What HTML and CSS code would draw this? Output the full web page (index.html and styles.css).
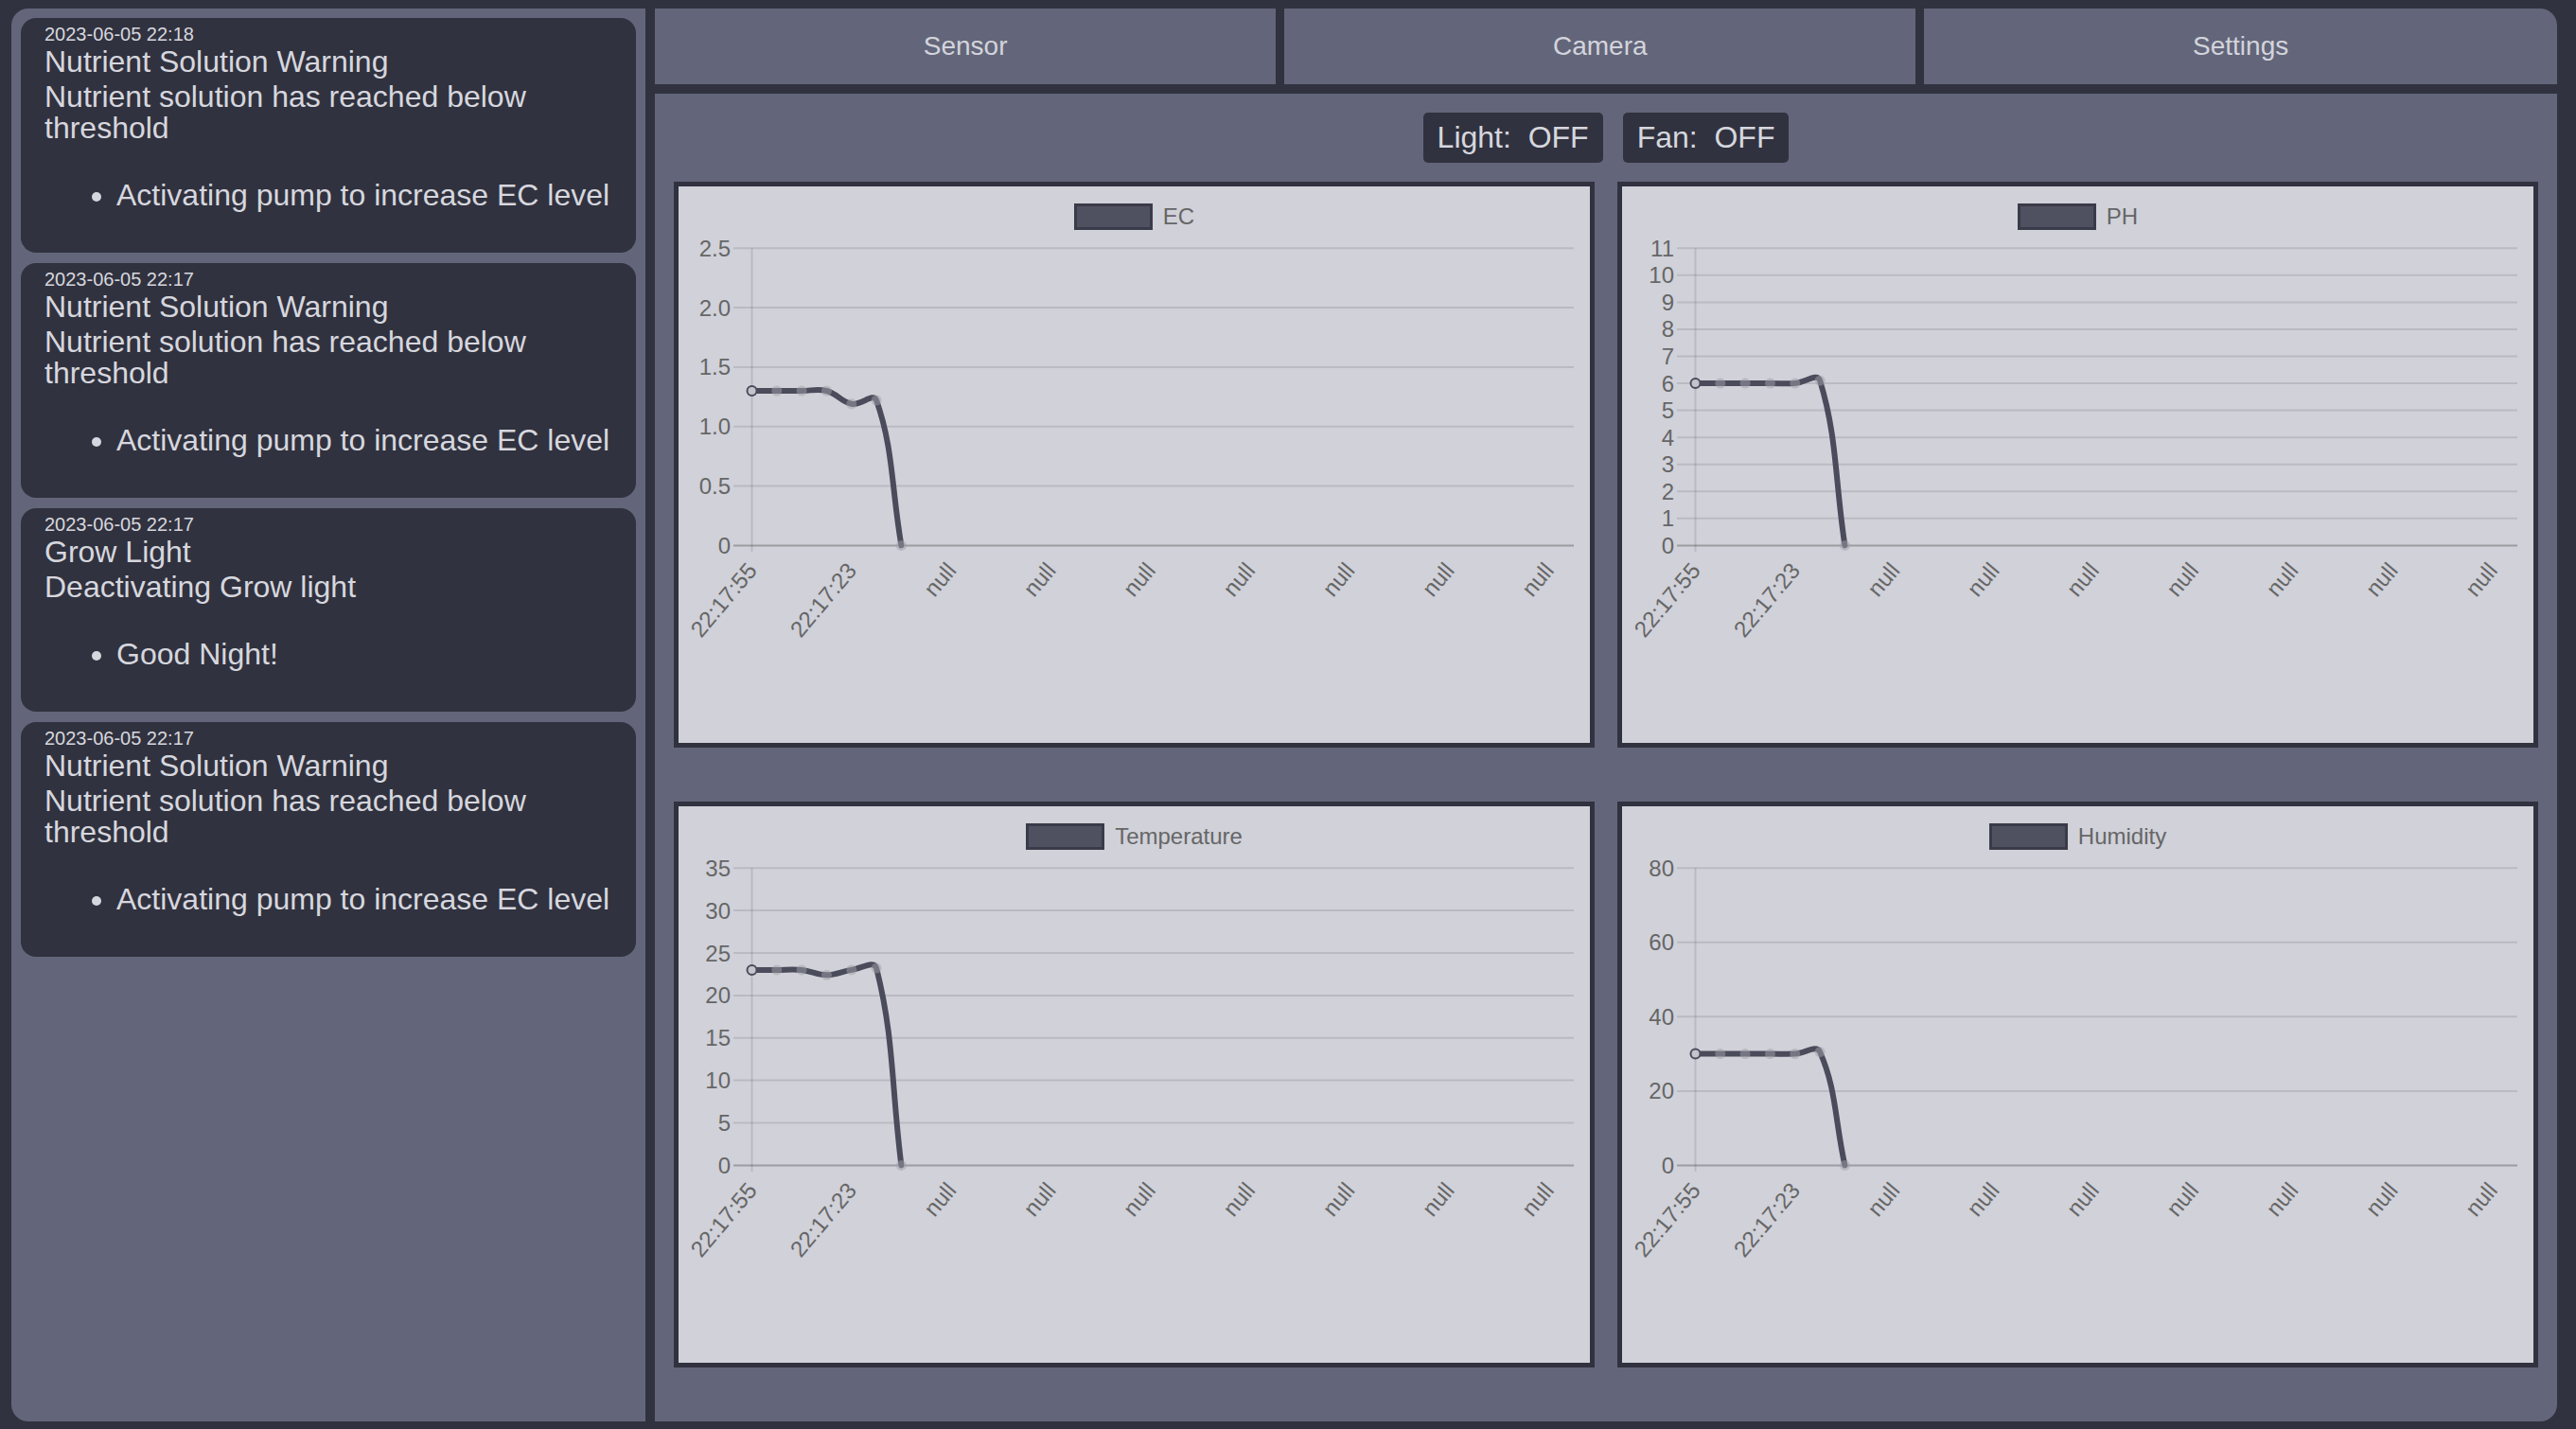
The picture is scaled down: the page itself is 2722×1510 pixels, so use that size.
FILE: index.html
```html
<!DOCTYPE html>
<html lang="en">
<head>
<meta charset="utf-8">
<title>Grow Dashboard</title>
<link rel="stylesheet" href="styles.css">
</head>
<body>
<div class="app">
  <aside class="sidebar">
    <article class="note">
      <div class="note-time">2023-06-05 22:18</div>
      <div class="note-title">Nutrient Solution Warning</div>
      <p class="note-msg">Nutrient solution has reached below threshold</p>
      <ul class="note-actions"><li>Activating pump to increase EC level</li></ul>
    </article>
    <article class="note">
      <div class="note-time">2023-06-05 22:17</div>
      <div class="note-title">Nutrient Solution Warning</div>
      <p class="note-msg">Nutrient solution has reached below threshold</p>
      <ul class="note-actions"><li>Activating pump to increase EC level</li></ul>
    </article>
    <article class="note">
      <div class="note-time">2023-06-05 22:17</div>
      <div class="note-title">Grow Light</div>
      <p class="note-msg">Deactivating Grow light</p>
      <ul class="note-actions"><li>Good Night!</li></ul>
    </article>
    <article class="note">
      <div class="note-time">2023-06-05 22:17</div>
      <div class="note-title">Nutrient Solution Warning</div>
      <p class="note-msg">Nutrient solution has reached below threshold</p>
      <ul class="note-actions"><li>Activating pump to increase EC level</li></ul>
    </article>
  </aside>

  <main class="main">
    <nav class="tabs">
      <div class="tab">Sensor</div>
      <div class="tab">Camera</div>
      <div class="tab">Settings</div>
    </nav>

    <section class="panel">
      <div class="status">
        <div class="badge">Light:&nbsp; OFF</div>
        <div class="badge">Fan:&nbsp; OFF</div>
      </div>

      <div class="charts">
        <!-- EC -->
        <div class="chart">
          <div class="legend"><span class="legend-box"></span><span>EC</span></div>
          <svg class="plot" viewBox="0 0 963 542">
            <g class="grid">
              <line x1="58" x2="946" y1="19.2" y2="19.2"/>
              <line x1="58" x2="946" y1="82" y2="82"/>
              <line x1="58" x2="946" y1="144.9" y2="144.9"/>
              <line x1="58" x2="946" y1="207.7" y2="207.7"/>
              <line x1="58" x2="946" y1="270.6" y2="270.6"/>
            </g>
            <line class="axis" x1="77.5" x2="77.5" y1="19.2" y2="340"/>
            <line class="zero" x1="58" x2="946" y1="333.4" y2="333.4"/>
            <g class="ylabels">
              <text x="55" y="19.2">2.5</text>
              <text x="55" y="82">2.0</text>
              <text x="55" y="144.9">1.5</text>
              <text x="55" y="207.7">1.0</text>
              <text x="55" y="270.6">0.5</text>
              <text x="55" y="333.4">0</text>
            </g>
            <g class="xlabels">
              <text transform="translate(77.5 355) rotate(-50)">22:17:55</text>
              <text transform="translate(182.8 355) rotate(-50)">22:17:23</text>
              <text transform="translate(288.1 355) rotate(-50)">null</text>
              <text transform="translate(393.3 355) rotate(-50)">null</text>
              <text transform="translate(498.6 355) rotate(-50)">null</text>
              <text transform="translate(603.9 355) rotate(-50)">null</text>
              <text transform="translate(709.2 355) rotate(-50)">null</text>
              <text transform="translate(814.5 355) rotate(-50)">null</text>
              <text transform="translate(919.7 355) rotate(-50)">null</text>
            </g>
            <path class="line" d="M77.5,170 C88,170 93.3,170 103.8,170 C114.3,170 119.6,170 130.1,170 C140.6,170 146.6,167.4 156.5,170 C167.7,172.9 171.7,181.7 182.8,183.8 C192.7,185.7 206,171.4 209.1,180.1 C227.1,231.3 224.9,272.1 235.4,333.4"/>
            <g class="pts">
              <circle cx="103.8" cy="170" r="5.5"/>
              <circle cx="130.1" cy="170" r="5.5"/>
              <circle cx="156.5" cy="170" r="5.5"/>
              <circle cx="182.8" cy="183.8" r="5.5"/>
              <circle cx="209.1" cy="180.1" r="5.5"/>
              <circle cx="235.4" cy="333.4" r="5.5"/>
            </g>
            <circle class="pt-first" cx="77.5" cy="170" r="5"/>
          </svg>
        </div>

        <!-- PH -->
        <div class="chart">
          <div class="legend"><span class="legend-box"></span><span>PH</span></div>
          <svg class="plot" viewBox="0 0 963 542">
            <g class="grid">
              <line x1="58" x2="946" y1="19.2" y2="19.2"/>
              <line x1="58" x2="946" y1="47.8" y2="47.8"/>
              <line x1="58" x2="946" y1="76.4" y2="76.4"/>
              <line x1="58" x2="946" y1="104.9" y2="104.9"/>
              <line x1="58" x2="946" y1="133.5" y2="133.5"/>
              <line x1="58" x2="946" y1="162" y2="162"/>
              <line x1="58" x2="946" y1="190.6" y2="190.6"/>
              <line x1="58" x2="946" y1="219.2" y2="219.2"/>
              <line x1="58" x2="946" y1="247.7" y2="247.7"/>
              <line x1="58" x2="946" y1="276.3" y2="276.3"/>
              <line x1="58" x2="946" y1="304.8" y2="304.8"/>
            </g>
            <line class="axis" x1="77.5" x2="77.5" y1="19.2" y2="340"/>
            <line class="zero" x1="58" x2="946" y1="333.4" y2="333.4"/>
            <g class="ylabels">
              <text x="55" y="19.2">11</text>
              <text x="55" y="47.8">10</text>
              <text x="55" y="76.4">9</text>
              <text x="55" y="104.9">8</text>
              <text x="55" y="133.5">7</text>
              <text x="55" y="162">6</text>
              <text x="55" y="190.6">5</text>
              <text x="55" y="219.2">4</text>
              <text x="55" y="247.7">3</text>
              <text x="55" y="276.3">2</text>
              <text x="55" y="304.8">1</text>
              <text x="55" y="333.4">0</text>
            </g>
            <g class="xlabels">
              <text transform="translate(77.5 355) rotate(-50)">22:17:55</text>
              <text transform="translate(182.8 355) rotate(-50)">22:17:23</text>
              <text transform="translate(288.1 355) rotate(-50)">null</text>
              <text transform="translate(393.3 355) rotate(-50)">null</text>
              <text transform="translate(498.6 355) rotate(-50)">null</text>
              <text transform="translate(603.9 355) rotate(-50)">null</text>
              <text transform="translate(709.2 355) rotate(-50)">null</text>
              <text transform="translate(814.5 355) rotate(-50)">null</text>
              <text transform="translate(919.7 355) rotate(-50)">null</text>
            </g>
            <path class="line" d="M77.5,162 C88,162 93.3,162 103.8,162 C114.3,162 119.6,162 130.1,162 C140.6,162 146,162 156.5,162 C167,162 172.3,162.6 182.8,162 C193.4,161.4 206.4,150.3 209.1,159.2 C227.4,218.8 224.9,263.7 235.4,333.4"/>
            <g class="pts">
              <circle cx="103.8" cy="162" r="5.5"/>
              <circle cx="130.1" cy="162" r="5.5"/>
              <circle cx="156.5" cy="162" r="5.5"/>
              <circle cx="182.8" cy="162" r="5.5"/>
              <circle cx="209.1" cy="159.2" r="5.5"/>
              <circle cx="235.4" cy="333.4" r="5.5"/>
            </g>
            <circle class="pt-first" cx="77.5" cy="162" r="5"/>
          </svg>
        </div>

        <!-- Temperature -->
        <div class="chart">
          <div class="legend"><span class="legend-box"></span><span>Temperature</span></div>
          <svg class="plot" viewBox="0 0 963 542">
            <g class="grid">
              <line x1="58" x2="946" y1="19.2" y2="19.2"/>
              <line x1="58" x2="946" y1="64.1" y2="64.1"/>
              <line x1="58" x2="946" y1="109" y2="109"/>
              <line x1="58" x2="946" y1="153.9" y2="153.9"/>
              <line x1="58" x2="946" y1="198.7" y2="198.7"/>
              <line x1="58" x2="946" y1="243.6" y2="243.6"/>
              <line x1="58" x2="946" y1="288.5" y2="288.5"/>
            </g>
            <line class="axis" x1="77.5" x2="77.5" y1="19.2" y2="340"/>
            <line class="zero" x1="58" x2="946" y1="333.4" y2="333.4"/>
            <g class="ylabels">
              <text x="55" y="19.2">35</text>
              <text x="55" y="64.1">30</text>
              <text x="55" y="109">25</text>
              <text x="55" y="153.9">20</text>
              <text x="55" y="198.7">15</text>
              <text x="55" y="243.6">10</text>
              <text x="55" y="288.5">5</text>
              <text x="55" y="333.4">0</text>
            </g>
            <g class="xlabels">
              <text transform="translate(77.5 355) rotate(-50)">22:17:55</text>
              <text transform="translate(182.8 355) rotate(-50)">22:17:23</text>
              <text transform="translate(288.1 355) rotate(-50)">null</text>
              <text transform="translate(393.3 355) rotate(-50)">null</text>
              <text transform="translate(498.6 355) rotate(-50)">null</text>
              <text transform="translate(603.9 355) rotate(-50)">null</text>
              <text transform="translate(709.2 355) rotate(-50)">null</text>
              <text transform="translate(814.5 355) rotate(-50)">null</text>
              <text transform="translate(919.7 355) rotate(-50)">null</text>
            </g>
            <path class="line" d="M77.5,126.9 C88,126.9 93.3,126.9 103.8,126.9 C114.3,126.9 119.7,125.8 130.1,126.9 C140.7,128 146,132.3 156.5,132.3 C167,132.3 172.2,128.4 182.8,126.9 C193.2,125.5 206.8,115.9 209.1,125.1 C227.8,198.5 224.9,250.1 235.4,333.4"/>
            <g class="pts">
              <circle cx="103.8" cy="126.9" r="5.5"/>
              <circle cx="130.1" cy="126.9" r="5.5"/>
              <circle cx="156.5" cy="132.3" r="5.5"/>
              <circle cx="182.8" cy="126.9" r="5.5"/>
              <circle cx="209.1" cy="125.1" r="5.5"/>
              <circle cx="235.4" cy="333.4" r="5.5"/>
            </g>
            <circle class="pt-first" cx="77.5" cy="126.9" r="5"/>
          </svg>
        </div>

        <!-- Humidity -->
        <div class="chart">
          <div class="legend"><span class="legend-box"></span><span>Humidity</span></div>
          <svg class="plot" viewBox="0 0 963 542">
            <g class="grid">
              <line x1="58" x2="946" y1="19.2" y2="19.2"/>
              <line x1="58" x2="946" y1="97.8" y2="97.8"/>
              <line x1="58" x2="946" y1="176.3" y2="176.3"/>
              <line x1="58" x2="946" y1="254.9" y2="254.9"/>
            </g>
            <line class="axis" x1="77.5" x2="77.5" y1="19.2" y2="340"/>
            <line class="zero" x1="58" x2="946" y1="333.4" y2="333.4"/>
            <g class="ylabels">
              <text x="55" y="19.2">80</text>
              <text x="55" y="97.8">60</text>
              <text x="55" y="176.3">40</text>
              <text x="55" y="254.9">20</text>
              <text x="55" y="333.4">0</text>
            </g>
            <g class="xlabels">
              <text transform="translate(77.5 355) rotate(-50)">22:17:55</text>
              <text transform="translate(182.8 355) rotate(-50)">22:17:23</text>
              <text transform="translate(288.1 355) rotate(-50)">null</text>
              <text transform="translate(393.3 355) rotate(-50)">null</text>
              <text transform="translate(498.6 355) rotate(-50)">null</text>
              <text transform="translate(603.9 355) rotate(-50)">null</text>
              <text transform="translate(709.2 355) rotate(-50)">null</text>
              <text transform="translate(814.5 355) rotate(-50)">null</text>
              <text transform="translate(919.7 355) rotate(-50)">null</text>
            </g>
            <path class="line" d="M77.5,215.6 C88,215.6 93.3,215.6 103.8,215.6 C114.3,215.6 119.6,215.6 130.1,215.6 C140.6,215.6 146,215.6 156.5,215.6 C167,215.6 172.3,216 182.8,215.6 C193.3,215.2 205.4,205.3 209.1,213.6 C226.4,252.4 224.9,285.5 235.4,333.4"/>
            <g class="pts">
              <circle cx="103.8" cy="215.6" r="5.5"/>
              <circle cx="130.1" cy="215.6" r="5.5"/>
              <circle cx="156.5" cy="215.6" r="5.5"/>
              <circle cx="182.8" cy="215.6" r="5.5"/>
              <circle cx="209.1" cy="213.6" r="5.5"/>
              <circle cx="235.4" cy="333.4" r="5.5"/>
            </g>
            <circle class="pt-first" cx="77.5" cy="215.6" r="5"/>
          </svg>
        </div>
      </div>
    </section>
  </main>
</div>
</body>
</html>
```

FILE: styles.css
```css
html, body {
  margin: 0;
  height: 100%;
  background: #31323f;
}

body {
  box-sizing: border-box;
  padding: 9px 20px 8px 12px;
  font-family: "Liberation Sans", Arial, Helvetica, sans-serif;
  color: #d6d7de;
}

.app {
  display: flex;
  gap: 10px;
  height: 1493px;
}

/* ---------- Sidebar ---------- */
.sidebar {
  box-sizing: border-box;
  width: 670px;
  flex: none;
  background: #63667a;
  border-radius: 18px 0 0 18px;
  padding: 10px;
  display: flex;
  flex-direction: column;
  gap: 11px;
}

.note {
  background: #31323f;
  border-radius: 16px;
  padding: 6px 15px 6px 25px;
}

.note-time {
  font-size: 20px;
  line-height: 23px;
}

.note-title {
  font-size: 32px;
  line-height: 33px;
  margin-top: 1px;
}

.note-msg {
  font-size: 32px;
  line-height: 33px;
  margin: 4px 0 0;
}

.note-actions {
  font-size: 32px;
  line-height: 33px;
  margin: 38px 0;
  padding-left: 76px;
}

/* ---------- Main ---------- */
.main {
  flex: 1;
  min-width: 0;
  display: flex;
  flex-direction: column;
  gap: 10px;
}

.tabs {
  display: flex;
  gap: 9px;
  height: 80px;
  flex: none;
}

.tab {
  flex: 1 1 auto;
  background: #63667a;
  display: flex;
  align-items: center;
  justify-content: center;
  font-size: 28px;
  color: #d3d4dc;
}

.tab:last-child {
  border-top-right-radius: 18px;
}

.panel {
  flex: 1;
  background: #63667a;
  border-bottom-right-radius: 18px;
  padding: 20px 20px 0 20px;
}

.status {
  display: flex;
  justify-content: center;
  gap: 21px;
  height: 53px;
  margin-bottom: 20px;
}

.badge {
  background: #31323f;
  border-radius: 5px;
  padding: 0 15px;
  font-size: 32px;
  line-height: 53px;
  white-space: nowrap;
}

.charts {
  display: grid;
  grid-template-columns: 1fr 1fr;
  grid-template-rows: 655px 655px;
  column-gap: 24px;
  align-items: start;
}

.chart {
  box-sizing: border-box;
  height: 598px;
  border: 5px solid #31323f;
  background: #d0d1d9;
  padding-top: 18px;
  display: flex;
  flex-direction: column;
}

.legend {
  height: 28px;
  display: flex;
  justify-content: center;
  align-items: center;
  gap: 11px;
  font-size: 24px;
  color: #666;
}

.legend-box {
  box-sizing: border-box;
  width: 83px;
  height: 28px;
  border: 3px solid #3a3b49;
  background: #4f5161;
}

.plot {
  display: block;
  width: 100%;
  height: 542px;
}

.grid line {
  stroke: rgba(0, 0, 0, 0.1);
  stroke-width: 2;
}

.axis {
  stroke: rgba(0, 0, 0, 0.1);
  stroke-width: 2;
}

.zero {
  stroke: rgba(0, 0, 0, 0.25);
  stroke-width: 2;
}

.ylabels text {
  font-family: "Liberation Sans", Arial, sans-serif;
  font-size: 24px;
  fill: #666;
  text-anchor: end;
  dominant-baseline: central;
}

.xlabels text {
  font-family: "Liberation Sans", Arial, sans-serif;
  font-size: 24px;
  fill: #666;
  text-anchor: end;
  dominant-baseline: central;
}

.line {
  fill: none;
  stroke: #4a4b5b;
  stroke-width: 6;
  stroke-linejoin: round;
  stroke-linecap: round;
}

.pts circle {
  fill: rgba(160, 161, 170, 0.5);
}

.pt-first {
  fill: #c3c4cc;
  stroke: #4a4b5b;
  stroke-width: 2;
}
```
